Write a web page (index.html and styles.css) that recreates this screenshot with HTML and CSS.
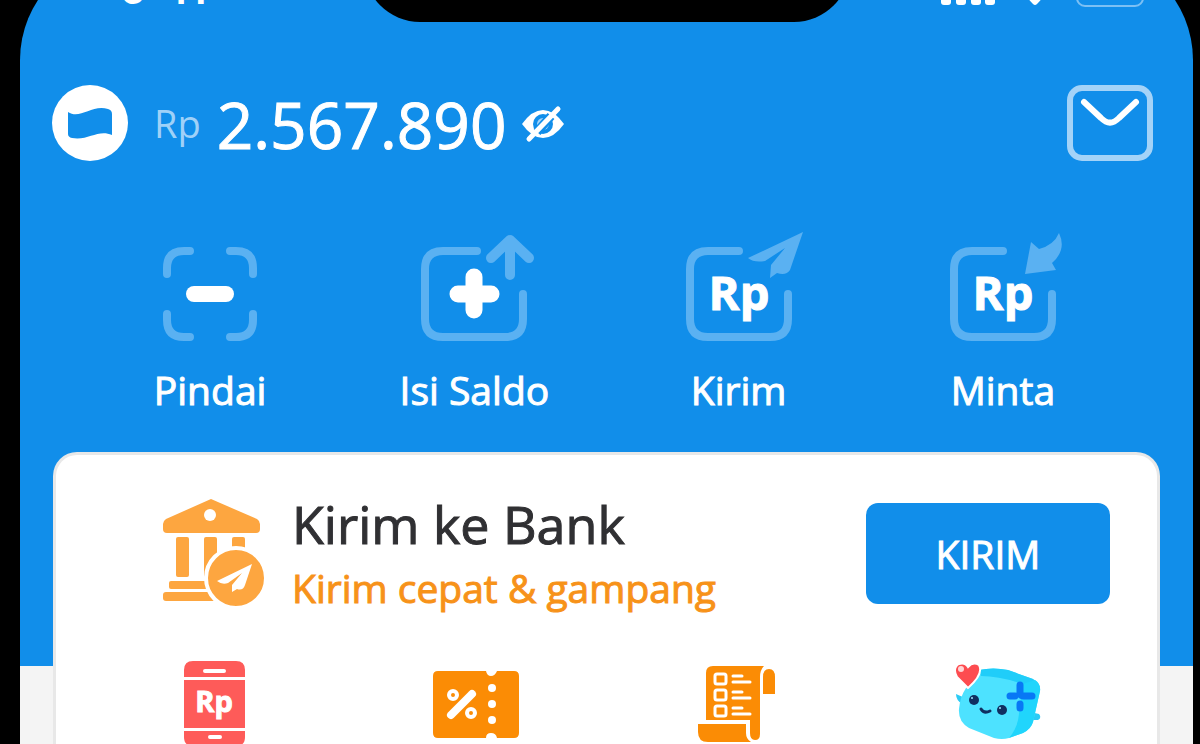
FILE: index.html
```html
<!DOCTYPE html>
<html lang="id">
<head>
    <meta charset="UTF-8">
    <meta name="viewport" content="width=device-width, initial-scale=1.0">
    <title>Dompet</title>
    <link rel="stylesheet" href="styles.css">
</head>
<body>
    <div class="phone">
        <div class="status-bar">
            <span class="time">9:41</span>
            <div class="notch"></div>
            <svg class="status-icons" width="206" height="30" viewBox="0 0 206 30">
                <g fill="#fff">
                    <rect x="1" y="17" width="10" height="11" rx="3"/>
                    <rect x="16" y="12" width="10" height="16" rx="3"/>
                    <rect x="31" y="6" width="10" height="22" rx="3"/>
                    <rect x="45" y="0" width="10" height="28" rx="3"/>
                    <path d="M80 13Q95 1 110 13L97 27Q95 29 93 27Z"/>
                </g>
                <rect x="137" y="-4" width="66" height="33" rx="8" fill="none" stroke="#7cc0f4" stroke-width="2"/>
            </svg>
        </div>

        <div class="balance">
            <svg class="logo" width="76" height="76" viewBox="0 0 76 76">
                <circle cx="38" cy="38" r="38" fill="#fff"/>
                <path d="M16 27C28 35 40 19 56 24Q60 25 60 29V50C46 44 36 56 20 53Q16 52 16 49Z" fill="#118eea"/>
            </svg>
            <span class="currency">Rp</span>
            <span class="amount">2.567.890</span>
            <button class="icon-button" type="button" aria-label="Sembunyikan saldo">
                <svg width="44" height="40" viewBox="0 0 44 40">
                    <path d="M1 21Q11 7 22 7T43 21Q33 35 22 35T1 21Z" fill="#fff"/>
                    <circle cx="22" cy="21" r="10" fill="#118eea"/>
                    <circle cx="22" cy="21" r="6" fill="#a4d3f8"/>
                    <path d="M16 29L30 13" stroke="#118eea" stroke-width="9"/>
                    <path d="M8 36L37 6" stroke="#fff" stroke-width="5" stroke-linecap="round"/>
                </svg>
            </button>
            <button class="icon-button mail" type="button" aria-label="Kotak masuk">
                <svg width="86" height="76" viewBox="0 0 86 76">
                    <rect x="3" y="3" width="80" height="70" rx="12" fill="none" stroke="#a4d3f8" stroke-width="6"/>
                    <path d="M17 17L34 33Q43 42 52 33L69 17" fill="none" stroke="#fff" stroke-width="6" stroke-linecap="round"/>
                </svg>
            </button>
        </div>

        <nav class="actions">
            <button class="action" type="button">
                <svg width="132" height="116" viewBox="0 0 132 116">
                    <path class="frame" d="M46 21H40Q23 21 23 38V44M86 21H92Q109 21 109 38V44M23 84V90Q23 107 40 107H46M109 84V90Q109 107 92 107H86"/>
                    <rect x="42" y="56" width="48" height="16" rx="8" fill="#fff"/>
                </svg>
                <span>Pindai</span>
            </button>
            <button class="action" type="button">
                <svg width="132" height="116" viewBox="0 0 132 116">
                    <path class="frame" d="M69 21H35Q17 21 17 39V89Q17 107 35 107H97Q115 107 115 89V64"/>
                    <path d="M83 28L102 10L121 28M102 12V45" fill="none" stroke="#5ab1f2" stroke-width="10" stroke-linecap="round" stroke-linejoin="round"/>
                    <path d="M66 47V80M50 64H83" stroke="#fff" stroke-width="17" stroke-linecap="round"/>
                </svg>
                <span>Isi Saldo</span>
            </button>
            <button class="action" type="button">
                <svg width="132" height="116" viewBox="0 0 132 116">
                    <path class="frame" d="M66 21H35Q17 21 17 39V89Q17 107 35 107H97Q115 107 115 89V64"/>
                    <path d="M130 2L75 28Q81 33 92 31L112 18L98 35L97 48L104 43Q113 46 117 40Z" fill="#5ab1f2"/>
                    <text class="rp" x="66" y="80">Rp</text>
                </svg>
                <span>Kirim</span>
            </button>
            <button class="action" type="button">
                <svg width="132" height="116" viewBox="0 0 132 116">
                    <path class="frame" d="M66 21H35Q17 21 17 39V89Q17 107 35 107H97Q115 107 115 89V64"/>
                    <path d="M88 44L94 12L102 19Q117 15 122 3Q130 20 115 33L119 40Z" fill="#5ab1f2"/>
                    <text class="rp" x="66" y="80">Rp</text>
                </svg>
                <span>Minta</span>
            </button>
        </nav>

        <main class="card">
            <section class="promo">
                <svg width="104" height="108" viewBox="0 0 104 108">
                    <g fill="#fda640">
                        <path d="M49 0L95 20Q98 22 98 25V30Q98 34 94 34H5Q1 34 1 30V25Q1 22 4 20Z"/>
                        <rect x="14" y="38" width="13" height="40" rx="2"/>
                        <rect x="42" y="38" width="13" height="40" rx="2"/>
                        <rect x="70" y="38" width="13" height="20" rx="2"/>
                        <rect x="7" y="82" width="50" height="8" rx="2"/>
                        <rect x="1" y="93" width="60" height="9" rx="3"/>
                        <circle cx="74" cy="79" r="30" stroke="#fff" stroke-width="4"/>
                    </g>
                    <circle cx="48" cy="16" r="6" fill="#fff"/>
                    <path d="M90 65L55 82Q60 86 66 84L80 74L70 86V93L75 90Q81 92 83 86Z" fill="#fff"/>
                </svg>
                <div class="promo-text">
                    <h2>Kirim ke Bank</h2>
                    <p>Kirim cepat &amp; gampang</p>
                </div>
                <button class="send" type="button">KIRIM</button>
            </section>

            <section class="services">
                <svg width="96" height="88" viewBox="0 0 96 88">
                    <g fill="#fe5b59">
                        <path d="M18 17V10Q18 1 27 1H70Q79 1 79 10V17Z"/>
                        <rect x="18" y="20" width="61" height="48"/>
                        <path d="M18 71H79V77Q79 86 70 86H27Q18 86 18 77Z"/>
                    </g>
                    <path d="M39 11H58M44 77H54" stroke="#fff" stroke-width="4" stroke-linecap="round"/>
                    <text class="rp small" x="48" y="52">Rp</text>
                </svg>
                <svg width="96" height="88" viewBox="0 0 96 88">
                    <path d="M10 11H58Q59 16 63 16T69 11H86Q91 11 91 16V73Q91 78 86 78H69Q68 73 63 73T58 78H10Q5 78 5 73V16Q5 11 10 11Z" fill="#fb8c05"/>
                    <g fill="#fff">
                        <circle cx="64" cy="28" r="4"/>
                        <circle cx="64" cy="44" r="4"/>
                        <circle cx="64" cy="60" r="4"/>
                    </g>
                    <g fill="none" stroke="#fff" stroke-linecap="round">
                        <path d="M23 55L44 34" stroke-width="8"/>
                        <circle cx="25" cy="35" r="4" stroke-width="4"/>
                        <circle cx="43" cy="53" r="4" stroke-width="4"/>
                    </g>
                </svg>
                <svg width="96" height="88" viewBox="0 0 96 88">
                    <g fill="#fb8c05">
                        <path d="M24 6H75Q71 10 71 17V74Q71 80 66 80Q61 80 61 73V60H17V13Q17 6 24 6Z"/>
                        <path d="M74 34V17Q74 9 80 9T86 17V34Z"/>
                        <path d="M9 64H57V73Q57 79 62 82H19Q9 82 9 72Z"/>
                    </g>
                    <g fill="none" stroke="#fff" stroke-width="3" stroke-linecap="round">
                        <rect x="26" y="14" width="11" height="10" rx="2"/>
                        <rect x="26" y="30" width="11" height="10" rx="2"/>
                        <rect x="26" y="46" width="11" height="10" rx="2"/>
                        <path d="M44 16H53M44 22H61M44 32H53M44 38H61M44 48H53M44 54H61"/>
                    </g>
                </svg>
                <svg width="96" height="88" viewBox="0 0 96 88">
                    <path d="M5 34L14 38L11 44Q5 40 5 34ZM79 52L88 54Q91 58 87 60H76Z" fill="#2ccbf5"/>
                    <path d="M28 10Q42 7 57 10L82 19Q90 23 89 31L82 62Q80 69 72 73L58 78Q51 80 43 78L18 68Q7 62 8 49Q9 37 15 28Z" fill="#4de2ff"/>
                    <path d="M28 10Q42 7 57 10L82 19L89 27L74 25Q50 16 30 16Z" fill="#20cdf9"/>
                    <path d="M72 24L84 20Q90 24 89 31L82 62Q80 69 72 73L58 78Q67 67 68 54Q70 34 72 24Z" fill="#20d5fc"/>
                    <path d="M69 25V34Q70 36 73 36H81M59 36H64M69 44V48" fill="none" stroke="#0878f5" stroke-width="7" stroke-linecap="round"/>
                    <g fill="#102f60">
                        <circle cx="23" cy="40" r="5"/>
                        <circle cx="51" cy="50" r="5"/>
                    </g>
                    <g fill="#9fe9ff">
                        <circle cx="21" cy="38" r="1"/>
                        <circle cx="49" cy="48" r="1"/>
                    </g>
                    <path d="M30 49Q33 54 39 51" fill="none" stroke="#102f60" stroke-width="3" stroke-linecap="round"/>
                    <path d="M17 28L6 17Q1 8 8 4Q14 2 17 7Q22 1 28 5Q33 14 17 28Z" fill="#fd4c50" stroke="#fff" stroke-width="2"/>
                    <circle cx="10" cy="9" r="3" fill="#ffd5d5"/>
                </svg>
            </section>
        </main>
    </div>
</body>
</html>
```
FILE: styles.css
```css
body {
    font-family: "Open Sans", sans-serif;
    display: flex;
    flex-direction: column;
    height: 100vh;
    margin: 0;
    overflow: hidden;
    background-color: #000;
}

button {
    padding: 0;
    border: none;
    background: none;
    color: white;
    font-family: inherit;
    cursor: pointer;
}

svg {
    display: block;
    flex-shrink: 0;
}

.phone {
    flex: 1 0 auto;
    margin: -49px 7px 0 20px;
    border-radius: 109px 109px 0 0;
    background: linear-gradient(#118eea 715px, #f4f4f4 715px);
    color: white;
}

.status-bar {
    display: grid;
    grid-template-columns: 1fr 486px 1fr;
    align-items: end;
    height: 71px;
}

.time {
    padding: 0 0 14px 100px;
    font-family: Inter, sans-serif;
    font-size: 43px;
    font-weight: 600;
    line-height: 40px;
}

.notch {
    height: 71px;
    border-radius: 0 0 56px 56px;
    background-color: #000;
}

.status-icons {
    justify-self: end;
    margin: 0 47px 15px 0;
}

.balance {
    display: flex;
    align-items: center;
    padding: 63px 40px 0 32px;
}

.currency {
    margin: 0 16px 0 26px;
    font-size: 38px;
    color: #9fd1f8;
}

/* half-step weight between regular and semibold */
.amount,
.action,
.promo-text,
.send {
    -webkit-text-stroke: 1px;
}

.amount {
    margin-right: 15px;
    padding-top: 4px;
    font-size: 64px;
    line-height: 72px;
}

.mail {
    margin-left: auto;
}

.actions {
    display: grid;
    grid-template-columns: repeat(4, 1fr);
    padding: 69px 58px 36px;
}

.action {
    display: flex;
    flex-direction: column;
    align-items: center;
    gap: 18px;
    font-size: 39px;
    line-height: 52px;
}

.frame {
    fill: none;
    stroke: #5ab1f2;
    stroke-width: 8px;
    stroke-linecap: round;
}

.rp {
    fill: white;
    stroke: white;
    stroke-width: 1px;
    font-size: 47px;
    font-weight: 700;
    text-anchor: middle;
    -webkit-text-stroke: 0;
}

.rp.small {
    font-size: 29px;
}

.card {
    margin: 0 33px;
    padding-top: 31px;
    border: 3px solid #e8e8e8;
    border-bottom: none;
    border-radius: 24px 24px 0 0;
    background-color: white;
}

.promo {
    display: flex;
    align-items: center;
    gap: 26px;
    padding: 0 47px 0 106px;
}

.promo-text {
    flex: 1;
    padding-top: 6px;
    line-height: 64px;
}

.promo h2 {
    margin: 0;
    font-size: 52px;
    font-weight: 400;
    color: #303033;
}

.promo p {
    margin: 0;
    font-size: 39px;
    color: #f79219;
}

.send {
    width: 244px;
    height: 101px;
    border-radius: 12px;
    background-color: #118eea;
    font-size: 39px;
}

.services {
    display: grid;
    grid-template-columns: repeat(4, 1fr);
    justify-items: center;
    padding: 40px 27px 0;
}
```
